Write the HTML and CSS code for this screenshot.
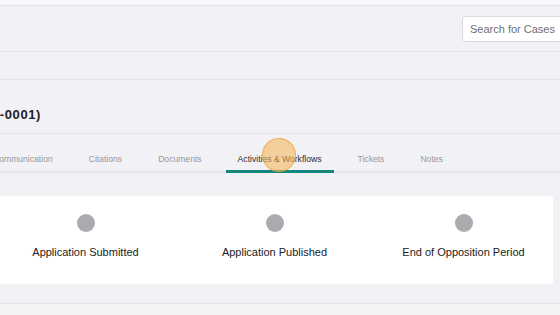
FILE: index.html
```html
<!DOCTYPE html>
<html lang="en">

<head>
    <meta charset="UTF-8">
    <title>Case Details</title>
    <meta name="viewport" content="width=device-width, initial-scale=1">
    <link rel="stylesheet" href="styles.css">
</head>

<body>
    <div class="top-strip"></div>
    <div class="header">
        <input class="search" type="text" placeholder="Search for Cases">
    </div>
    <div class="sub-bar"></div>
    <div class="title-bar">
        <div class="title-clip">
            <h1 class="case-title">Trademark Case (US-TM-2023-0001)</h1>
        </div>
    </div>
    <div class="tabs">
        <div class="tab">Communication</div>
        <div class="tab">Citations</div>
        <div class="tab">Documents</div>
        <div class="tab active">Activities &amp; Workflows</div>
        <div class="tab">Tickets</div>
        <div class="tab">Notes</div>
    </div>
    <div class="card">
        <div class="steps">
            <div class="step">
                <span class="dot"></span>
                <span class="step-label">Application Submitted</span>
            </div>
            <div class="step">
                <span class="dot"></span>
                <span class="step-label">Application Published</span>
            </div>
            <div class="step">
                <span class="dot"></span>
                <span class="step-label">End of Opposition Period</span>
            </div>
        </div>
    </div>
    <div class="footer-bar"></div>

    <!-- click marker -->
    <div class="click-marker"></div>
</body>

</html>
```

FILE: styles.css
```css
body {
    background: #f2f2f6;
    font-family: 'Liberation Sans', Arial, sans-serif;
    margin: 0;
    padding: 0;
    overflow: hidden;
    height: 315px;
    position: relative;
}

.top-strip {
    height: 5px;
    background: #f8f8fa;
    border-bottom: 1px solid #e2e2e7;
}

.header {
    height: 45px;
    display: flex;
    align-items: center;
    justify-content: flex-end;
    border-bottom: 1px solid #e4e4e9;
}

.search {
    width: 112px;
    height: 26px;
    box-sizing: border-box;
    margin-right: -14px;
    border: 1px solid #dcdce0;
    border-radius: 3px;
    background: #fff;
    padding: 0 7px;
    font-family: 'Liberation Sans', Arial, sans-serif;
    font-size: 11px;
    color: #555;
}

.search::placeholder {
    color: #707075;
}

.sub-bar {
    height: 27px;
    border-bottom: 1px solid #e4e4e9;
}

.title-bar {
    height: 54px;
    box-sizing: border-box;
    padding-top: 27px;
    border-bottom: 1px solid #e4e4e9;
}

.title-clip {
    width: 41px;
    display: flex;
    justify-content: flex-end;
}

.case-title {
    margin: 0;
    white-space: nowrap;
    font-size: 13px;
    line-height: 16px;
    font-weight: bold;
    color: #1e1e22;
    letter-spacing: 0.6px;
}

.tabs {
    display: flex;
    margin-left: -19px;
    border-bottom: 2px solid #e4e4e9;
    height: 37px;
}

.tab {
    padding: 19px 12px 0 12px;
    margin-right: 12px;
    font-size: 8.6px;
    line-height: 12px;
    color: #97979d;
    white-space: nowrap;
    box-sizing: border-box;
    height: 39px;
    margin-bottom: -2px;
}

.tab.active {
    color: #2b2b30;
    border-bottom: 3px solid #16877d;
}

.card {
    background: #fff;
    margin: 23px 7px 0 -20px;
    height: 88px;
    box-sizing: border-box;
    padding: 18px 0 0 11px;
}

.steps {
    display: grid;
    grid-template-columns: repeat(3, 189px);
}

.step {
    display: flex;
    flex-direction: column;
    align-items: center;
}

.dot {
    width: 18px;
    height: 18px;
    border-radius: 50%;
    background: #ababaf;
}

.step-label {
    margin-top: 14px;
    font-size: 11px;
    line-height: 13px;
    color: #1c1c20;
    white-space: nowrap;
}

.footer-bar {
    margin-top: 19px;
    border-top: 1px solid #e2e2e7;
    height: 20px;
    background: #f3f3f6;
}

.click-marker {
    position: absolute;
    left: 262px;
    top: 138px;
    width: 34px;
    height: 34px;
    box-sizing: border-box;
    border-radius: 50%;
    background: rgba(248, 178, 80, 0.55);
    border: 1px solid rgba(236, 160, 60, 0.75);
}
```
